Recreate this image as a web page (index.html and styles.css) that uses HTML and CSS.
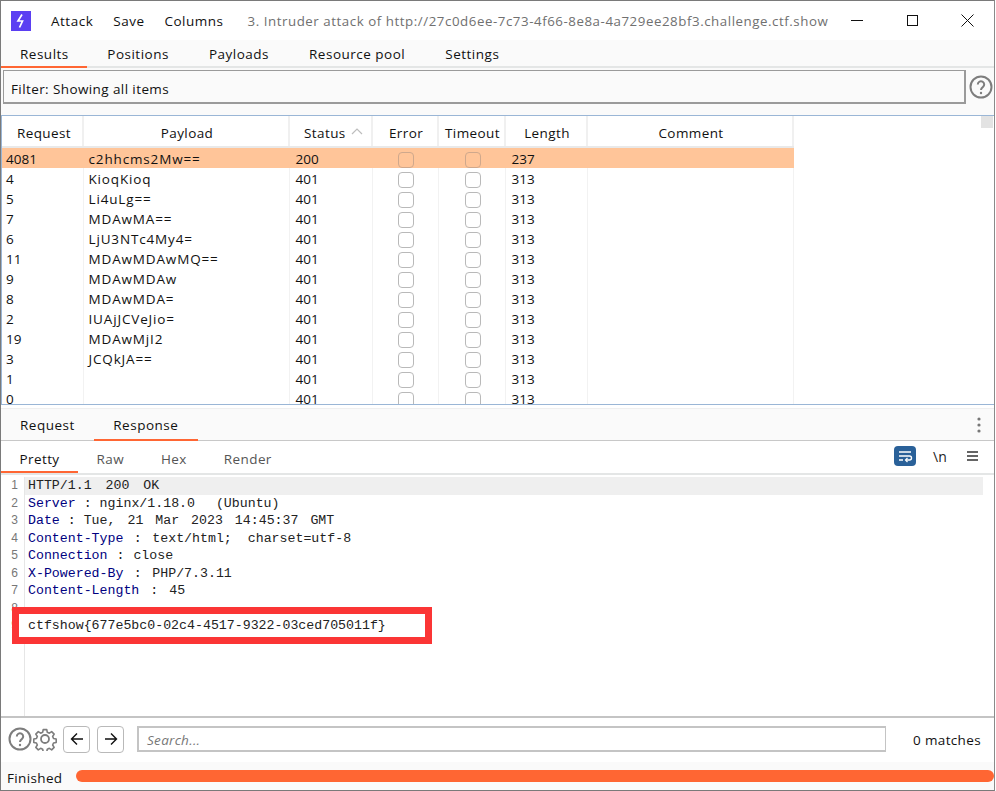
FILE: index.html
```html
<!DOCTYPE html>
<html lang="en">
<head>
<meta charset="utf-8">
<title>Intruder attack</title>
<link rel="stylesheet" href="styles.css">
</head>
<body>
<div class="window">
  <header class="titlebar">
    <svg class="logo" viewBox="0 0 20 20"><rect width="20" height="20" fill="#5b3ff2"/><path d="M11 3.5 7 10h4.500L8.500 16.500" fill="none" stroke="#fff" stroke-width="1.700"/></svg>
    <nav class="menu"><span>Attack</span><span>Save</span><span>Columns</span></nav>
    <span class="wintitle">3. Intruder attack of http://27c0d6ee-7c73-4f66-8e8a-4a729ee28bf3.challenge.ctf.show</span>
    <div class="controls">
      <svg viewBox="0 0 13 13"><path d="M0 6.500h12" stroke="#111" stroke-width="1"/></svg>
      <svg viewBox="0 0 13 13"><rect x="1.500" y="1.500" width="10" height="10" fill="none" stroke="#111"/></svg>
      <svg viewBox="0 0 13 13"><path d="M.5.500l12 12M12.500.500l-12 12" stroke="#111" stroke-width="1"/></svg>
    </div>
  </header>
  <div class="tabs main-tabs">
    <span class="tab active">Results</span><span class="tab">Positions</span><span class="tab">Payloads</span><span class="tab">Resource pool</span><span class="tab">Settings</span>
  </div>
  <div class="filter-row">
    <div class="filter">Filter: Showing all items</div>
    <svg class="help" viewBox="0 0 24 24"><circle cx="12" cy="12" r="10.500" fill="none" stroke="#7d7d7d" stroke-width="2"/><path d="M8.800 9.500a3.200 3.200 0 1 1 5 2.600c-1.200.8-1.800 1.400-1.800 2.900" fill="none" stroke="#7d7d7d" stroke-width="2"/><circle cx="12" cy="18" r="1.200" fill="#7d7d7d"/></svg>
  </div>
  <section class="results">
    <div class="table-wrap">
      <table>
        <colgroup><col class="c1"><col class="c2"><col class="c3"><col class="c4"><col class="c5"><col class="c6"><col class="c7"></colgroup>
        <thead><tr><th class="first-head">Request</th><th>Payload</th><th class="status-head">Status<svg class="sort" viewBox="0 0 12 7"><path d="M1 6l5-5 5 5" fill="none" stroke="#bdbdbd" stroke-width="1.200"/></svg></th><th>Error</th><th>Timeout</th><th>Length</th><th>Comment</th></tr></thead>
        <tbody>
          <tr class="selected"><td class="rq">4081</td><td class="pl">c2hhcms2Mw==</td><td class="st">200</td><td><i class="cb"></i></td><td><i class="cb"></i></td><td class="st">237</td><td></td></tr>
          <tr><td class="rq">4</td><td class="pl">KioqKioq</td><td class="st">401</td><td><i class="cb"></i></td><td><i class="cb"></i></td><td class="st">313</td><td></td></tr>
          <tr><td class="rq">5</td><td class="pl">Li4uLg==</td><td class="st">401</td><td><i class="cb"></i></td><td><i class="cb"></i></td><td class="st">313</td><td></td></tr>
          <tr><td class="rq">7</td><td class="pl">MDAwMA==</td><td class="st">401</td><td><i class="cb"></i></td><td><i class="cb"></i></td><td class="st">313</td><td></td></tr>
          <tr><td class="rq">6</td><td class="pl">LjU3NTc4My4=</td><td class="st">401</td><td><i class="cb"></i></td><td><i class="cb"></i></td><td class="st">313</td><td></td></tr>
          <tr><td class="rq">11</td><td class="pl">MDAwMDAwMQ==</td><td class="st">401</td><td><i class="cb"></i></td><td><i class="cb"></i></td><td class="st">313</td><td></td></tr>
          <tr><td class="rq">9</td><td class="pl">MDAwMDAw</td><td class="st">401</td><td><i class="cb"></i></td><td><i class="cb"></i></td><td class="st">313</td><td></td></tr>
          <tr><td class="rq">8</td><td class="pl">MDAwMDA=</td><td class="st">401</td><td><i class="cb"></i></td><td><i class="cb"></i></td><td class="st">313</td><td></td></tr>
          <tr><td class="rq">2</td><td class="pl">IUAjJCVeJio=</td><td class="st">401</td><td><i class="cb"></i></td><td><i class="cb"></i></td><td class="st">313</td><td></td></tr>
          <tr><td class="rq">19</td><td class="pl">MDAwMjI2</td><td class="st">401</td><td><i class="cb"></i></td><td><i class="cb"></i></td><td class="st">313</td><td></td></tr>
          <tr><td class="rq">3</td><td class="pl">JCQkJA==</td><td class="st">401</td><td><i class="cb"></i></td><td><i class="cb"></i></td><td class="st">313</td><td></td></tr>
          <tr><td class="rq">1</td><td class="pl"></td><td class="st">401</td><td><i class="cb"></i></td><td><i class="cb"></i></td><td class="st">313</td><td></td></tr>
          <tr><td class="rq">0</td><td class="pl"></td><td class="st">401</td><td><i class="cb"></i></td><td><i class="cb"></i></td><td class="st">313</td><td></td></tr>
        </tbody>
      </table>
    </div>
    <div class="scrollbar"><div class="thumb"></div></div>
  </section>
  <div class="tabs reqres-tabs">
    <span class="tab">Request</span><span class="tab active">Response</span>
    <svg class="kebab" viewBox="0 0 4 16"><circle cx="2" cy="2" r="1.600"/><circle cx="2" cy="8" r="1.600"/><circle cx="2" cy="14" r="1.600"/></svg>
  </div>
  <div class="tabs view-tabs">
    <span class="tab active">Pretty</span><span class="tab">Raw</span><span class="tab">Hex</span><span class="tab">Render</span>
    <div class="view-tools">
      <svg class="wrap-btn" viewBox="0 0 22 20"><rect width="22" height="20" rx="4" fill="#2a6199"/><path d="M5 6h12M5 10h10.500a2 2 0 0 1 0 4H12M5 14h4" fill="none" stroke="#fff" stroke-width="1.400"/><path d="M13.500 12l-2 2 2 2" fill="none" stroke="#fff" stroke-width="1.200"/></svg>
      <span class="nl">\n</span>
      <svg class="burger" viewBox="0 0 11 10"><path d="M0 1h11M0 5h11M0 9h11" stroke="#333" stroke-width="1.400"/></svg>
    </div>
  </div>
  <section class="editor">
    <div class="gutter"><div>1</div><div>2</div><div>3</div><div>4</div><div>5</div><div>6</div><div>7</div><div>8</div><div>9</div></div>
    <div class="code">
      <div class="line current"><span class="v">HTTP/1.1 200 OK</span></div>
      <div class="line l-server"><b>Server</b> : <span class="v">nginx/1.18.0  (Ubuntu)</span></div>
      <div class="line l-date"><b>Date</b> : <span class="v">Tue, 21 Mar 2023 14:45:37 GMT</span></div>
      <div class="line l-type"><b>Content-Type</b> : <span class="v">text/html; charset=utf-8</span></div>
      <div class="line l-conn"><b>Connection</b> : <span class="v">close</span></div>
      <div class="line l-type"><b>X-Powered-By</b> : <span class="v">PHP/7.3.11</span></div>
      <div class="line l-len"><b>Content-Length</b> : <span class="v">45</span></div>
      <div class="line"></div>
      <div class="line flag">ctfshow{677e5bc0-02c4-4517-9322-03ced705011f}</div>
    </div>
    <div class="highlight"></div>
  </section>
  <div class="searchbar">
    <svg class="ic-help" viewBox="0 0 24 24"><circle cx="12" cy="12" r="10.500" fill="none" stroke="#7d7d7d" stroke-width="2"/><path d="M8.800 9.500a3.200 3.200 0 1 1 5 2.600c-1.200.8-1.800 1.400-1.800 2.900" fill="none" stroke="#7d7d7d" stroke-width="2"/><circle cx="12" cy="18" r="1.200" fill="#7d7d7d"/></svg>
    <svg class="ic-gear" viewBox="0 0 24 24"><path d="M10 1.500h4l.6 3 2.300 1 2.600-1.700 2.800 2.800-1.700 2.600 1 2.300 3 .6v3.800l-3 .6-1 2.300 1.700 2.600-2.800 2.800-2.600-1.700-2.300 1-.6 2.900h-4l-.6-2.900-2.300-1-2.600 1.700-2.800-2.800 1.700-2.600-1-2.300-3-.6v-3.800l3-.6 1-2.300-1.700-2.600 2.800-2.800 2.600 1.700 2.300-1z" transform="translate(1.300 1.300) scale(.89)" fill="none" stroke="#7d7d7d" stroke-width="1.800" stroke-linejoin="round"/><circle cx="12" cy="12" r="4" fill="none" stroke="#7d7d7d" stroke-width="1.800"/></svg>
    <button class="nav-btn"><svg viewBox="0 0 14 14"><path d="M13 7H1.500M7 1.500 1.500 7 7 12.500" fill="none" stroke="#111" stroke-width="1.400"/></svg></button>
    <button class="nav-btn"><svg viewBox="0 0 14 14"><path d="M1 7h11.500M7 1.500 12.500 7 7 12.500" fill="none" stroke="#111" stroke-width="1.400"/></svg></button>
    <div class="search">Search...</div>
    <span class="matches">0 matches</span>
  </div>
  <footer class="statusbar">
    <span>Finished</span>
    <div class="progress"></div>
  </footer>
</div>
</body>
</html>
```
FILE: styles.css
```css
* { box-sizing: border-box; }
html, body { margin: 0; padding: 0; }
body { width: 996px; height: 791px; overflow: hidden; background: #fff; font-family: "Open Sans", "Noto Sans", sans-serif; font-size: 13.5px; color: #111; }
.window { width: 995px; height: 791px; border: 1px solid #7a7a7a; border-right-color: #8a8a8a; display: flex; flex-direction: column; background: #fff; }
.titlebar { height: 39px; flex: none; display: flex; align-items: center; padding-left: 10px; background: #fff; }
.logo { width: 20px; height: 20px; flex: none; }
.menu { display: flex; gap: 20px; margin-left: 20px; }
.menu span { letter-spacing: .5px; }
.wintitle { margin-left: 24px; color: #707070; white-space: nowrap; letter-spacing: .55px; font-size: 13.3px; }
.controls { margin-left: auto; display: flex; gap: 42px; padding-right: 20px; }
.controls svg { width: 13px; height: 13px; display: block; }
.tabs { display: flex; align-items: stretch; flex: none; background: #fafafa; }
.tab { display: flex; align-items: center; justify-content: center; letter-spacing: .5px; border-bottom: 2px solid transparent; white-space: nowrap; }
.tab.active { border-bottom-color: #ff6633; }
.main-tabs { height: 28px; border-bottom: 2px solid #e4e6e6; }
.main-tabs .tab { margin-bottom: -2px; height: 28px; padding: 2px 20px 0; }
.main-tabs .tab:nth-child(1) { padding-left: 19px; padding-right: 18.5px; }
.filter-row { height: 47px; flex: none; display: flex; align-items: flex-start; padding: 2px 0 0 2px; background: #fafafa; }
.filter { width: 963px; height: 34px; border: 1px solid #9a9a9a; border-right-width: 2px; border-bottom-width: 2px; display: flex; align-items: center; padding: 4px 0 0 7px; letter-spacing: .4px; background: #fafafa; }
.help { width: 24px; height: 24px; margin: 5px 0 0 3px; flex: none; }
.results { height: 290px; flex: none; display: flex; border-top: 1px solid #9ab6d6; border-bottom: 1px solid #9ab6d6; border-left: 1px solid #9ab6d6; background: #fff; overflow: hidden; }
.table-wrap { width: 979px; height: 288px; overflow: hidden; flex: none; }
table { width: 792px; table-layout: fixed; border-collapse: collapse; border-spacing: 0; }
col.c1 { width: 81px; } col.c2 { width: 206px; } col.c3 { width: 83px; } col.c4 { width: 66px; } col.c5 { width: 67px; } col.c6 { width: 82px; } col.c7 { width: 206px; }
th { height: 31px; font-weight: 400; text-align: center; letter-spacing: .4px; padding: 3px 0 0 2px; border-right: 2px solid #f0f0f0; border-bottom: 2px solid #e9e9e9; font-size: 13.5px; }
th.first-head { padding-left: 4px; }
th.status-head { text-align: left; padding-left: 14px; }
.sort { width: 12px; height: 7px; margin-left: 5px; vertical-align: 3px; }
td { height: 20px; padding: 2px 0 0 2px; border-right: 1px solid #f2f2f2; font-size: 13.5px; white-space: nowrap; line-height: 18px; overflow: hidden; }
td.rq { padding-left: 4px; }
td.pl { padding-left: 5px; letter-spacing: .85px; }
td.st { padding-left: 6px; }
tr.selected td { background: #ffc599; border-right-color: #ffc599; }
.cb { display: block; width: 16px; height: 16px; margin: 1px auto 0; border: 1px solid #b9b9b9; border-radius: 4px; background: #fff; }
tr.selected .cb { background: #ffc599; border-color: #cfa88c; }
.scrollbar { width: 12px; flex: none; }
.thumb { height: 12px; background: #e3e3e3; }
.reqres-tabs { height: 33px; border-bottom: 1px solid #c8c8c8; margin-top: 3px; border-top: 1px solid #efefef; }
.reqres-tabs .tab { height: 32px; padding: 2px 19.5px 0 19px; }
.reqres-tabs .tab.active { padding: 2px 20px 0 19px; }
.kebab { width: 4px; height: 16px; margin: 8px 13px 0 auto; fill: #777; }
.view-tabs { height: 34px; background: #fff; border-bottom: 2px solid #e4e6e6; }
.view-tabs .tab { height: 32px; padding: 6px 18.5px 0; letter-spacing: .4px; }
.view-tabs .tab:not(.active) { color: #555; }
.view-tools { margin-left: auto; display: flex; align-items: center; padding: 0 16px 2px 0; }
.wrap-btn { width: 22px; height: 20px; }
.nl { margin-left: 17px; font-size: 14px; width: 12px; color: #222; }
.burger { width: 11px; height: 10px; margin-left: 22px; }
.editor { height: 243px; flex: none; display: flex; position: relative; padding-top: 2px; border-bottom: 2px solid #c4c4c4; background: #fff; overflow: hidden; }
.gutter { width: 24px; flex: none; border-right: 1px solid #e6e6e6; color: #777; font-family: "Liberation Sans", sans-serif; font-size: 12px; line-height: 17.5px; text-align: right; padding-right: 6px; }
.code { width: 958px; font-family: "Liberation Mono", monospace; font-size: 13.25px; line-height: 17.5px; color: #222; }
.code b { font-weight: 400; color: #000080; }
.line { height: 17.5px; padding-left: 3px; white-space: pre; word-spacing: 2px; }
.v { word-spacing: 6px; }
.l-server { word-spacing: 0; }
.l-server .v { word-spacing: 2.5px; }
.l-date { word-spacing: 0; }
.l-date .v { word-spacing: 4px; }
.l-type { word-spacing: 2.5px; }
.l-type .v { word-spacing: 8px; }
.l-conn { word-spacing: 1px; }
.l-len { word-spacing: 3px; }
.current { background: #efefef; }
.flag { position: relative; z-index: 1; word-spacing: 0; }
.highlight { position: absolute; left: 11px; top: 132px; width: 420px; height: 37px; border: 7px solid #fb3535; background: #fff; }
.searchbar { height: 44px; flex: none; display: flex; align-items: center; padding: 0 0 2px 7px; background: #fff; }
.ic-help { width: 24px; height: 24px; flex: none; }
.ic-gear { width: 24px; height: 24px; margin-left: 1px; flex: none; }
.nav-btn { width: 27px; height: 27px; padding: 0; margin-left: 6px; background: #fff; border: 1px solid #b9b9b9; border-radius: 4px; display: flex; align-items: center; justify-content: center; flex: none; }
.nav-btn + .nav-btn { margin-left: 7px; }
.nav-btn svg { width: 14px; height: 14px; }
.search { width: 749px; height: 26px; margin-left: 13px; border: 2px solid #c4c4c4; border-right-width: 1px; display: flex; align-items: center; padding: 1px 0 0 8px; font-style: italic; color: #777; letter-spacing: .3px; flex: none; }
.matches { margin-left: 27px; padding-top: 2px; letter-spacing: .35px; white-space: nowrap; }
.statusbar { flex: 1; display: flex; align-items: flex-start; padding: 8px 0 0 6px; background: #fafafa; }
.statusbar span { width: 69px; flex: none; letter-spacing: .35px; line-height: 16px; }
.progress { flex: 1; height: 12px; border-radius: 6px; background: #ff6633; }
```
